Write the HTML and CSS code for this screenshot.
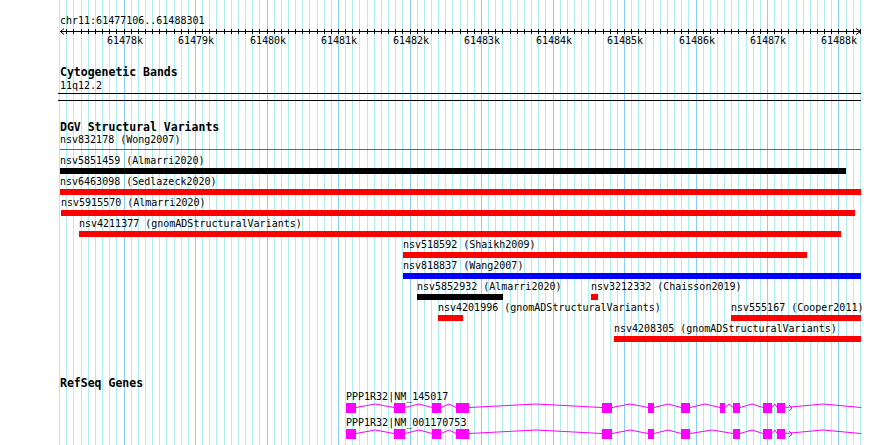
FILE: index.html
```html
<!DOCTYPE html>
<html lang="en">
<head>
    <meta charset="UTF-8">
    <title>chr11:61477106..61488301</title>
    <link rel="stylesheet" href="styles.css">
</head>
<body>
    <div class="browser">
        <svg class="grid" id="grid" width="890" height="445"></svg>

        <div class="view">
            <div class="locus">chr11:61477106..61488301</div>

            <div class="ruler" id="ruler">
                <svg class="ruler-axis" id="ruler-axis" width="801" height="9"></svg>
            </div>

            <section class="track track-cyto">
                <h2 class="track-title">Cytogenetic Bands</h2>
                <div class="band-name">11q12.2</div>
                <div class="band"></div>
            </section>

            <section class="track track-dgv">
                <h2 class="track-title">DGV Structural Variants</h2>
                <div id="dgv"></div>
            </section>

            <section class="track track-genes">
                <h2 class="track-title">RefSeq Genes</h2>
                <div id="genes"></div>
            </section>
        </div>
    </div>

    <script>
        // view: chr11:61477106..61488301, 61478k sits at x=124, ~71.5px per kb
        const VIEW_LEFT = 60;
        const VIEW_RIGHT = 861;
        const SVG_NS = 'http://www.w3.org/2000/svg';

        function toX(bp) {
            return 124 + (bp - 61478000) * 0.0715;
        }

        function clip(x) {
            return Math.min(Math.max(x, VIEW_LEFT), VIEW_RIGHT);
        }

        function svgEl(name, attrs) {
            const el = document.createElementNS(SVG_NS, name);
            for (const k in attrs) el.setAttribute(k, attrs[k]);
            return el;
        }

        // Background grid, one line every 100bp
        const grid = document.getElementById('grid');
        const axis = document.getElementById('ruler-axis');
        const ruler = document.getElementById('ruler');
        for (let bp = 61477100; bp <= 61488300; bp += 100) {
            const x = Math.floor(toX(bp)) + 0.5;
            const major = bp % 1000 === 0;
            grid.appendChild(svgEl('line', {
                x1: x, x2: x, y1: 0, y2: 445,
                stroke: major ? '#87cefa' : '#afeeee'
            }));
            axis.appendChild(svgEl('line', {
                x1: x - VIEW_LEFT, x2: x - VIEW_LEFT, y1: 2, y2: 7, stroke: '#000'
            }));
            if (major) {
                const label = document.createElement('span');
                label.className = 'tick-label';
                label.textContent = (bp / 1000) + 'k';
                label.style.left = Math.round(x - VIEW_LEFT - 18) + 'px';
                ruler.appendChild(label);
            }
        }
        axis.appendChild(svgEl('line', { x1: 0, x2: 801, y1: 4.5, y2: 4.5, stroke: '#000' }));
        axis.appendChild(svgEl('polyline', { points: '4,1.5 0.5,4.5 4,7.5', fill: 'none', stroke: '#000' }));
        axis.appendChild(svgEl('polyline', { points: '796,1.5 800.5,4.5 796,7.5', fill: 'none', stroke: '#000' }));

        // DGV structural variants, one array per row
        const variants = [
            [{ name: 'nsv832178 (Wong2007)', start: 61477000, end: 61488500, type: 'line' }],
            [{ name: 'nsv5851459 (Almarri2020)', start: 61477000, end: 61488098, color: 'black' }],
            [{ name: 'nsv6463098 (Sedlazeck2020)', start: 61477000, end: 61488500, color: 'red' }],
            [{ name: 'nsv5915570 (Almarri2020)', start: 61477119, end: 61488224, color: 'red' }],
            [{ name: 'nsv4211377 (gnomADStructuralVariants)', start: 61477371, end: 61488028, color: 'red' }],
            [{ name: 'nsv518592 (Shaikh2009)', start: 61481902, end: 61487552, color: 'red' }],
            [{ name: 'nsv818837 (Wang2007)', start: 61481902, end: 61488500, color: 'blue' }],
            [
                { name: 'nsv5852932 (Almarri2020)', start: 61482098, end: 61483301, color: 'black' },
                { name: 'nsv3212332 (Chaisson2019)', start: 61484531, end: 61484629, color: 'red' }
            ],
            [
                { name: 'nsv4201996 (gnomADStructuralVariants)', start: 61482392, end: 61482741, color: 'red' },
                { name: 'nsv555167 (Cooper2011)', start: 61486490, end: 61488500, color: 'red' }
            ],
            [{ name: 'nsv4208305 (gnomADStructuralVariants)', start: 61484853, end: 61488500, color: 'red' }]
        ];

        const dgv = document.getElementById('dgv');
        variants.forEach(function (row) {
            const rowEl = document.createElement('div');
            rowEl.className = 'row';
            row.forEach(function (f) {
                const x1 = clip(Math.round(toX(f.start)));
                const x2 = clip(Math.round(toX(f.end)));
                const feat = document.createElement('div');
                feat.className = 'feat';
                feat.style.left = (x1 - VIEW_LEFT) + 'px';
                feat.innerHTML = '<span class="feat-label">' + f.name + '</span>';
                const bar = document.createElement('div');
                bar.className = f.type === 'line' ? 'feat-line' : 'feat-bar ' + f.color;
                bar.style.width = (x2 - x1) + 'px';
                feat.appendChild(bar);
                rowEl.appendChild(feat);
            });
            dgv.appendChild(rowEl);
        });

        // RefSeq transcripts
        const exons = [
            [61481105, 61481245], [61481776, 61481930], [61482308, 61482434], [61482643, 61482825],
            [61484685, 61484825], [61485329, 61485413], [61485790, 61485916], [61486336, 61486406],
            [61486517, 61486615], [61486937, 61487063], [61487133, 61487245]
        ];
        const transcripts = [
            { name: 'PPP1R32|NM_145017', exons: exons },
            { name: 'PPP1R32|NM_001170753', exons: exons.filter(function (e) { return e[0] !== 61486336; }) }
        ];

        const genes = document.getElementById('genes');
        transcripts.forEach(function (t) {
            const row = document.createElement('div');
            row.className = 'gene';
            const startX = Math.round(toX(t.exons[0][0]));
            const label = document.createElement('div');
            label.className = 'gene-label';
            label.style.paddingLeft = (startX - VIEW_LEFT) + 'px';
            label.textContent = t.name;
            row.appendChild(label);

            const svg = svgEl('svg', { class: 'gene-glyph', width: 801, height: 10 });
            const boxes = t.exons.map(function (e) {
                return [Math.round(toX(e[0])) - VIEW_LEFT, Math.round(toX(e[1])) - VIEW_LEFT];
            });
            boxes.forEach(function (b, i) {
                const a = b[1];
                const z = i < boxes.length - 1 ? boxes[i + 1][0] : VIEW_RIGHT - VIEW_LEFT;
                const mid = Math.round((a + z) / 2);
                svg.appendChild(svgEl('polyline', {
                    points: a + ',4.5 ' + mid + ',1 ' + z + ',4.5',
                    fill: 'none', stroke: '#f0f'
                }));
            });
            boxes.forEach(function (b) {
                svg.appendChild(svgEl('rect', { x: b[0], y: 0, width: b[1] - b[0], height: 10, fill: '#f0f' }));
            });
            const ax = boxes[boxes.length - 1][1] + 4;
            svg.appendChild(svgEl('polyline', {
                points: ax + ',2 ' + (ax + 3) + ',5 ' + ax + ',8', fill: 'none', stroke: '#f0f'
            }));
            row.appendChild(svg);
            genes.appendChild(row);
        });
    </script>
</body>
</html>
```

FILE: styles.css
```css
/* Basic Reset */
* {
    box-sizing: border-box;
    margin: 0;
    padding: 0;
}
body {
    font-family: 'DejaVu Sans Mono', 'Liberation Mono', monospace;
    font-size: 10px;
    line-height: 12px;
    color: #000;
    background: #fff;
}
.browser {
    position: relative;
    width: 890px;
    height: 445px;
    overflow: hidden;
}
.grid {
    position: absolute;
    top: 0;
    left: 0;
}
.view {
    position: relative;
    width: 801px;
    margin-left: 60px;
    padding-top: 15px;
}
.locus {
    height: 12px;
}

/* Ruler */
.ruler {
    position: relative;
    height: 21px;
}
.ruler-axis {
    display: block;
}
.tick-label {
    position: absolute;
    top: 8px;
    width: 36px;
    text-align: center;
}

/* Tracks */
.track-title {
    font-size: 11.5px;
    font-weight: bold;
    line-height: 13px;
}
.track-cyto {
    margin-top: 18px;
}
.track-dgv {
    margin-top: 20px;
}
.track-genes {
    margin-top: 33px;
}
.band-name {
    margin-top: 1px;
}
.band {
    margin: 1px 0 0 -2px;
    width: 803px;
    height: 8px;
    border-top: 1px solid #000;
    border-bottom: 1px solid #000;
}

/* Variant rows */
.row {
    position: relative;
    height: 21px;
}
.feat {
    position: absolute;
    top: 0;
}
.feat-label {
    white-space: nowrap;
}
.feat-bar {
    position: absolute;
    top: 13px;
    left: 0;
    height: 6px;
}
.feat-line {
    position: absolute;
    top: 15px;
    left: 0;
    height: 1px;
    background: #a0522d;
}
.black { background: #000; }
.red { background: #f00; }
.blue { background: #00f; }

/* Genes */
#genes {
    margin-top: 1px;
}
.gene {
    height: 26px;
}
.gene-label {
    white-space: nowrap;
}
.gene-glyph {
    display: block;
}
```
